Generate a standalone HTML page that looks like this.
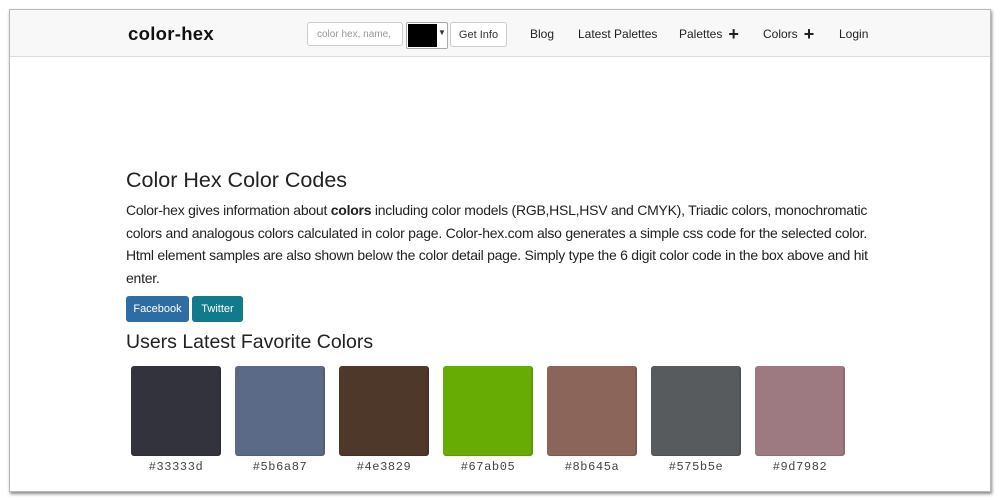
<!DOCTYPE html>
<html><head><style>
body{margin:0;background:#fff;width:1000px;height:500px;overflow:hidden;font-family:"Liberation Sans",sans-serif;position:relative}
.frame{position:absolute;left:9px;top:9px;width:980px;height:481px;border:1px solid #b8b8b8;box-shadow:1px 2px 3px #888;background:#fff}
.nav{position:absolute;left:0;top:0;width:980px;height:46px;background:#f8f8f8;border-bottom:1px solid #ddd}
.logo{position:absolute;left:118px;top:13px;font-size:18.5px;font-weight:bold;color:#111;letter-spacing:.3px}
.inp{position:absolute;left:297px;top:12px;height:24px;border:1px solid #ccc;border-radius:3px;background:#fff;font-size:10px;color:#999;line-height:24px;padding-left:9px;box-sizing:border-box;width:96px}
.sw{position:absolute;left:396px;top:12px;width:40px;height:25px;border:1px solid #aaa;border-radius:2px;background:#fff}
.sw i{position:absolute;left:1px;top:1px;width:29px;height:23px;background:#000}
.sw b{position:absolute;left:31px;top:5px;font-size:8px;color:#333}
.btn{position:absolute;left:440px;top:12px;width:57px;height:25px;border:1px solid #ccc;border-radius:3px;background:#fff;font-size:11px;color:#333;text-align:center;line-height:25px;box-sizing:border-box}
.menu{position:absolute;top:17px;font-size:12px;color:#222}
.plus{font-size:18px;font-weight:bold;vertical-align:-2px;margin-left:6px}
h1{position:absolute;left:116px;top:158px;margin:0;font-size:21.5px;font-weight:normal;color:#222}
p{position:absolute;left:116px;top:189px;width:760px;margin:0;font-size:14px;letter-spacing:-0.25px;line-height:22.7px;color:#222}
.fb,.tw{position:absolute;top:286px;height:26px;line-height:26px;color:#fff;font-size:11px;text-align:center;border-radius:3px}
.fb{left:116px;width:63px;background:#2e6da4}
.tw{left:182px;width:51px;background:#117a8b}
h2{position:absolute;left:116px;top:321px;margin:0;font-size:19.5px;font-weight:normal;color:#222}
.c{position:absolute;top:356px;width:90px;height:90px;border-radius:3px;box-shadow:inset -2px -1px 0 rgba(0,0,0,.1)}
.l{position:absolute;top:450px;width:90px;text-align:center;font-family:"Liberation Mono",monospace;font-size:12px;letter-spacing:.6px;color:#444}
</style></head><body>
<div class="frame">
<div class="nav">
<div class="logo">color-hex</div>
<div class="inp">color hex, name,</div>
<div class="sw"><i></i><b>▼</b></div>
<div class="btn">Get Info</div>
<div class="menu" style="left:520px">Blog</div>
<div class="menu" style="left:568px">Latest Palettes</div>
<div class="menu" style="left:669px;top:14px">Palettes<span class="plus">+</span></div>
<div class="menu" style="left:753px;top:14px">Colors<span class="plus">+</span></div>
<div class="menu" style="left:829px">Login</div>
</div>
<h1>Color Hex Color Codes</h1>
<p>Color-hex gives information about <b>colors</b> including color models (RGB,HSL,HSV and CMYK), Triadic colors, monochromatic colors and analogous colors calculated in color page. Color-hex.com also generates a simple css code for the selected color. Html element samples are also shown below the color detail page. Simply type the 6 digit color code in the box above and hit enter.</p>
<div class="fb">Facebook</div><div class="tw">Twitter</div>
<h2>Users Latest Favorite Colors</h2>
<div class="c" style="left:121px;background:#33333d"></div><div class="l" style="left:121px">#33333d</div>
<div class="c" style="left:225px;background:#5b6a87"></div><div class="l" style="left:225px">#5b6a87</div>
<div class="c" style="left:329px;background:#4e3829"></div><div class="l" style="left:329px">#4e3829</div>
<div class="c" style="left:433px;background:#67ab05"></div><div class="l" style="left:433px">#67ab05</div>
<div class="c" style="left:537px;background:#8b645a"></div><div class="l" style="left:537px">#8b645a</div>
<div class="c" style="left:641px;background:#575b5e"></div><div class="l" style="left:641px">#575b5e</div>
<div class="c" style="left:745px;background:#9d7982"></div><div class="l" style="left:745px">#9d7982</div>
</div>
</body></html>
